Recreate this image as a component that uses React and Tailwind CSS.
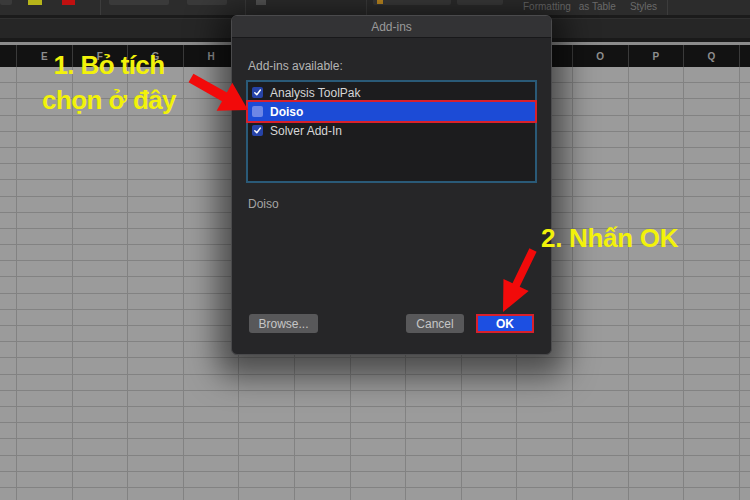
import React from 'react';

const cols = ['D', 'E', 'F', 'G', 'H', 'I', 'J', 'K', 'L', 'M', 'N', 'O', 'P', 'Q', 'R'];
// letters hidden under the dialog or cut at the edges
const hidden = ['D', 'I', 'J', 'K', 'L', 'M', 'N', 'R'];
const colWidth = (i) => (i === 0 ? 17 : 55.6);
const rows = Array.from({ length: 27 }, (_, i) => i);

// builds a thick arrow polygon from tail to tip
function arrowPoints(x1, y1, x2, y2, shaft, head, headLen) {
  const dx = x2 - x1;
  const dy = y2 - y1;
  const len = Math.hypot(dx, dy);
  const ux = dx / len;
  const uy = dy / len;
  const px = -uy;
  const py = ux;
  const bx = x2 - ux * headLen;
  const by = y2 - uy * headLen;
  const pts = [
    [x1 + px * shaft / 2, y1 + py * shaft / 2],
    [bx + px * shaft / 2, by + py * shaft / 2],
    [bx + px * head / 2, by + py * head / 2],
    [x2, y2],
    [bx - px * head / 2, by - py * head / 2],
    [bx - px * shaft / 2, by - py * shaft / 2],
    [x1 - px * shaft / 2, y1 - py * shaft / 2],
  ];
  return pts.map((p) => p.join(',')).join(' ');
}

const Check = ({ on }) => (
  <div className={`w-[11px] h-[11px] rounded-[2px] flex items-center justify-center ${on ? 'bg-[#2643a8]' : 'bg-[#6d86e6]'}`}>
    {on && (
      <svg width="9" height="9" viewBox="0 0 10 10">
        <path d="M2 5.2 L4.2 7.5 L8.2 2.2" fill="none" stroke="#fff" strokeWidth="1.6" strokeLinecap="round" strokeLinejoin="round" />
      </svg>
    )}
  </div>
);

const Button = ({ children, className }) => (
  <div className={`h-[19px] rounded-[3px] flex items-center justify-center text-[12px] ${className}`}>{children}</div>
);

export default function App() {
  return (
    <div className="relative w-[750px] h-[500px] overflow-hidden bg-[#9a9a9a]" style={{ fontFamily: '"Liberation Sans", Arial, sans-serif' }}>
      {/* ribbon */}
      <div className="h-[15px] bg-[#2c2c2c] flex items-start">
        <div className="w-[12px] h-[5px] bg-[#3a3a3a] rounded-b-[2px]" />
        <div className="w-[14px] h-[5px] bg-[#b7b51a] ml-[16px]" />
        <div className="w-[13px] h-[5px] bg-[#c01010] ml-[20px]" />
        <div className="w-px h-[15px] bg-[#3c3c3c] ml-[25px]" />
        <div className="w-[60px] h-[5px] bg-[#3a3a3a] rounded-b-[2px] ml-[8px]" />
        <div className="w-[40px] h-[5px] bg-[#3a3a3a] rounded-b-[2px] ml-[18px]" />
        <div className="w-px h-[15px] bg-[#3c3c3c] ml-[18px]" />
        <div className="w-[10px] h-[5px] bg-[#555] ml-[10px]" />
        <div className="w-px h-[15px] bg-[#3c3c3c] ml-[100px]" />
        <div className="w-[78px] h-[5px] bg-[#3a3a3a] rounded-b-[2px] ml-[6px] flex">
          <div className="w-[6px] h-[4px] bg-[#c08a20] ml-[4px]" />
        </div>
        <div className="w-[46px] h-[5px] bg-[#3a3a3a] rounded-b-[2px] ml-[6px]" />
        <div className="flex gap-[8px] ml-[20px] text-[10px] leading-[13px] text-[#6a6a6a]">
          <span>Formatting</span>
          <span>as Table</span>
          <span className="ml-[6px]">Styles</span>
        </div>
        <div className="w-px h-[15px] bg-[#3c3c3c] ml-[10px]" />
      </div>
      <div className="h-[3px] bg-[#1b1b1b]" />
      {/* formula bar */}
      <div className="h-[20px] bg-[#262626] border-t border-[#303030]" />
      <div className="h-[4px] bg-[#1a1a1a]" />
      <div className="h-[3px] bg-[#8c8c8c]" />
      {/* column header */}
      <div className="h-[22px] bg-[#121212] flex">
        {cols.map((c, i) => (
          <div
            key={c}
            className="shrink-0 h-full border-r border-[#3a3a3a] flex items-center justify-center text-[10px] font-bold text-[#8e8e8e]"
            style={{ width: colWidth(i) }}
          >
            {hidden.includes(c) ? '' : c}
          </div>
        ))}
      </div>
      {/* grid */}
      <div className="flex flex-col">
        {rows.map((r) => (
          <div key={r} className="flex h-[16.2px] shrink-0">
            {cols.map((c, i) => (
              <div
                key={c}
                className="shrink-0 h-full border-r border-b border-[#828282] bg-[#9b9b9b]"
                style={{ width: colWidth(i) }}
              />
            ))}
          </div>
        ))}
      </div>

      {/* dialog */}
      <div className="absolute left-[231px] top-[15px] w-[321px] h-[340px] rounded-[6px] border border-[#4a4a4c] bg-[#262628] shadow-[0_8px_30px_14px_rgba(0,0,0,0.5)] flex flex-col overflow-hidden">
        <div className="h-[22px] shrink-0 bg-[#333335] border-b border-[#18181a] flex items-center justify-center text-[12px] text-[#9a9a9a]">
          Add-ins
        </div>
        <div className="flex-1 flex flex-col px-[14px]">
          <div className="mt-[21px] ml-[2px] text-[12px] leading-[14px] text-[#b4b4b4]">Add-ins available:</div>
          <div className="mt-[7px] h-[103px] border-2 border-[#2a5a78] bg-[#1c1c1e] flex flex-col">
            <div className="h-[19px] mt-[1px] flex items-center pl-[4px] gap-[7px] text-[12px] text-[#d6d6d6]">
              <Check on />
              <span>Analysis ToolPak</span>
            </div>
            <div className="h-[19px] flex items-center pl-[4px] gap-[7px] text-[12px] font-bold text-white bg-[#1c4bd6] outline-2 outline-[#d8202c]">
              <Check on={false} />
              <span>Doiso</span>
            </div>
            <div className="h-[19px] flex items-center pl-[4px] gap-[7px] text-[12px] text-[#d6d6d6]">
              <Check on />
              <span>Solver Add-In</span>
            </div>
          </div>
          <div className="mt-[14px] ml-[2px] text-[12px] leading-[14px] text-[#a4a4a4]">Doiso</div>
          <div className="flex-1" />
          <div className="flex items-center mb-[21px] ml-[3px] mr-[3px]">
            <Button className="w-[69px] bg-[#58585a] text-[#c6c6c6]">Browse...</Button>
            <div className="flex-1" />
            <Button className="w-[58px] bg-[#58585a] text-[#c6c6c6]">Cancel</Button>
            <Button className="w-[58px] ml-[12px] rounded-none bg-[#1c4fe2] text-white font-bold border-2 border-[#d8202c]">OK</Button>
          </div>
        </div>
      </div>

      {/* annotations */}
      <div className="absolute left-[30px] top-[48px] w-[158px] text-center text-[26px] leading-[35px] font-bold text-[#f2f20a] tracking-[-0.6px]">
        <div>1. Bỏ tích</div>
        <div>chọn ở đây</div>
      </div>
      <div className="absolute left-[541px] top-[222px] text-[26px] leading-[32px] font-bold text-[#f2f20a] tracking-[-0.3px]">
        2. Nhấn OK
      </div>
      <svg className="absolute left-0 top-0 pointer-events-none" width="750" height="500">
        <polygon points={arrowPoints(191, 78, 248, 110, 10, 32, 27)} fill="#f20a0a" />
        <polygon points={arrowPoints(533, 250, 503, 312, 8, 28, 30)} fill="#f20a0a" />
      </svg>
    </div>
  );
}
